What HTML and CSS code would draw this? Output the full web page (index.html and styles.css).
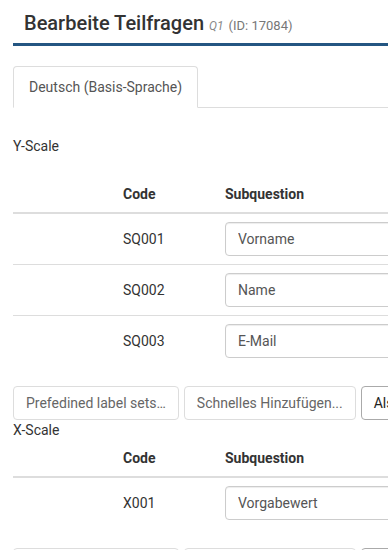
FILE: index.html
```html
<!DOCTYPE html>
<html lang="de">
<head>
    <meta charset="UTF-8">
    <meta name="viewport" content="width=device-width, initial-scale=1.0">
    <title>Bearbeite Teilfragen</title>
    <link rel="stylesheet" href="styles.css">
</head>
<body>
    <div class="page">
        <div class="page-header">
            <h1 class="title">Bearbeite Teilfragen <span class="qcode">Q1</span> <span class="qid">(ID: 17084)</span></h1>
        </div>

        <ul class="tabs">
            <li class="tab active">Deutsch (Basis-Sprache)</li>
        </ul>

        <div class="scale">
            <div class="scale-label">Y-Scale</div>
            <table class="subq">
                <thead>
                    <tr>
                        <th class="col-move"></th>
                        <th class="col-code">Code</th>
                        <th class="col-text">Subquestion</th>
                    </tr>
                </thead>
                <tbody>
                    <tr>
                        <td></td>
                        <td>SQ001</td>
                        <td><input class="field" type="text" value="Vorname"></td>
                    </tr>
                    <tr>
                        <td></td>
                        <td>SQ002</td>
                        <td><input class="field" type="text" value="Name"></td>
                    </tr>
                    <tr>
                        <td></td>
                        <td>SQ003</td>
                        <td><input class="field" type="text" value="E-Mail"></td>
                    </tr>
                </tbody>
            </table>
            <div class="actions">
                <button class="btn btn-muted">Prefedined label sets…</button>
                <button class="btn btn-muted">Schnelles Hinzufügen...</button>
                <button class="btn">Als Label-Set speichern</button>
            </div>
        </div>

        <div class="scale">
            <div class="scale-label">X-Scale</div>
            <table class="subq">
                <thead>
                    <tr>
                        <th class="col-move"></th>
                        <th class="col-code">Code</th>
                        <th class="col-text">Subquestion</th>
                    </tr>
                </thead>
                <tbody>
                    <tr>
                        <td></td>
                        <td>X001</td>
                        <td><input class="field" type="text" value="Vorgabewert"></td>
                    </tr>
                </tbody>
            </table>
            <div class="actions">
                <button class="btn btn-muted">Prefedined label sets…</button>
                <button class="btn btn-muted">Schnelles Hinzufügen...</button>
                <button class="btn">Als Label-Set speichern</button>
            </div>
        </div>
    </div>
</body>
</html>
```

FILE: styles.css
```css
html, body {
    margin: 0;
    padding: 0;
    overflow: hidden;
    background: #fff;
}
body {
    font-family: Roboto, 'Liberation Sans', sans-serif;
    font-size: 14px;
    line-height: 20px;
    color: #333;
}
.page {
    width: 780px;
    margin-left: 13px;
}
.page-header {
    padding: 12px 11px 9px;
    border-bottom: 3px solid #245682;
    margin-bottom: 20px;
}
.title {
    margin: 0;
    font-size: 20px;
    line-height: 22px;
    font-weight: 500;
    color: #333;
}
.qcode,
.qid {
    line-height: 1;
    font-weight: 400;
}
.qcode {
    font-size: 12px;
    font-style: italic;
    color: #888;
}
.qid {
    font-size: 13px;
    color: #777;
}
.tabs {
    list-style: none;
    margin: 0 0 28px;
    padding: 0;
    display: flex;
    border-bottom: 1px solid #ddd;
}
.tab {
    padding: 10px 15px;
    margin-bottom: -1px;
    border: 1px solid transparent;
    border-radius: 4px 4px 0 0;
    color: #555;
}
.tab.active {
    background: #fff;
    border-color: #ddd;
    border-bottom-color: transparent;
}
.scale-label {
    margin-bottom: 20px;
}
.scale + .scale .scale-label {
    margin-bottom: 0;
}
.subq {
    width: 100%;
    border-collapse: collapse;
    margin-bottom: 20px;
}
.subq th,
.subq td {
    padding: 8px;
    text-align: left;
    vertical-align: middle;
}
.subq th {
    font-weight: 700;
    border-bottom: 2px solid #ddd;
}
.subq tbody tr + tr td {
    border-top: 1px solid #ddd;
}
.col-move {
    width: 86px;
}
.col-code {
    width: 86px;
}
.field {
    display: block;
    box-sizing: border-box;
    width: 100%;
    height: 34px;
    padding: 6px 12px;
    font-family: inherit;
    font-size: 14px;
    color: #555;
    border: 1px solid #ccc;
    border-radius: 4px;
    box-shadow: inset 0 1px 1px rgba(0, 0, 0, 0.075);
}
.actions {
    display: flex;
    gap: 5px;
}
.btn {
    height: 34px;
    padding: 6px 12px;
    font-family: inherit;
    font-size: 14px;
    line-height: 20px;
    color: #222;
    background: #fff;
    border: 1px solid #aaa;
    border-radius: 4px;
    white-space: nowrap;
}
.btn-muted {
    color: #666;
    border-color: #ddd;
}
```
